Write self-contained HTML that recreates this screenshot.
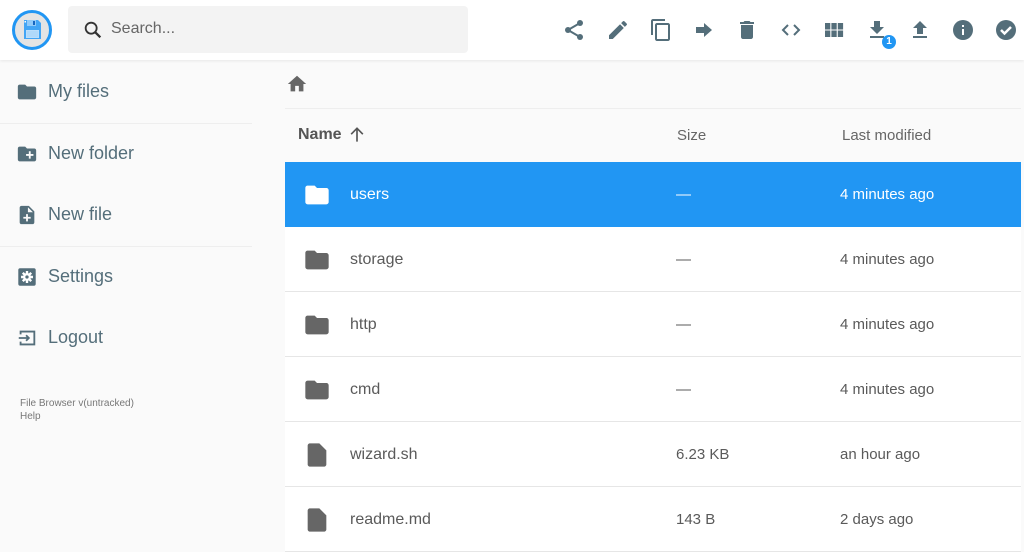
<!DOCTYPE html>
<html><head><meta charset="utf-8"><style>
*{box-sizing:border-box;margin:0;padding:0}
body{width:1024px;height:515px;overflow:hidden;background:#fafafa;font-family:"Liberation Sans",Roboto,sans-serif;position:relative}
.hdr{position:absolute;left:0;top:0;width:1024px;height:60px;background:#fff;box-shadow:0 1px 3px rgba(0,0,0,.08)}
.logo{position:absolute;left:12px;top:10px;width:40px;height:40px;border-radius:50%;border:3px solid #2196f3;background:#e4e4e4;overflow:hidden}
.search{position:absolute;left:68px;top:6px;width:400px;height:47px;background:#f3f3f3;border-radius:4px}
.search span{position:absolute;left:43px;top:14px;font-size:16px;color:#666}
.ic{position:absolute;top:18px;width:24px;height:24px}
.it{position:absolute;left:16px;font-size:18px;color:#546e7a}
.it svg{position:absolute;left:0;top:0;width:22px;height:22px}
.it span{position:absolute;left:32px;top:0;white-space:nowrap}
.sep{position:absolute;left:0;width:252px;height:1px;background:#eee}
.list{position:absolute;left:285px;top:108px;width:736px;}
.row{position:absolute;left:0;width:736px;height:65px;background:#fff;border-bottom:1px solid #e6e6e6;font-size:16px;color:#5a5a5a}
.row.sel{background:#2196f3;color:#fff;border-color:#2196f3}
.row svg{position:absolute;left:18px;top:19px;width:28px;height:28px}
.row .n{position:absolute;left:65px;top:24px}
.row .s{position:absolute;left:391px;top:24px;font-size:15px}
.row .m{position:absolute;left:555px;top:24px;font-size:15px}
</style></head><body>
<div class="hdr">
<div class="logo"><svg viewBox="0 0 34 34" width="34" height="34"><path d="M9 7h14l3 3v16H9z" fill="#42a5f5"/><rect x="12" y="7" width="9" height="6" fill="#90caf9"/><rect x="18" y="8" width="2" height="4" fill="#1565c0"/><rect x="11" y="17" width="13" height="8" fill="#bbdefb"/><path d="M12 19h11M12 21h11M12 23h11" stroke="#90caf9" stroke-width=".6"/><rect x="9.5" y="8" width="1.5" height="1.5" fill="#fff"/></svg></div>
<div class="search"><svg style="position:absolute;left:14px;top:13px" width="22" height="22" viewBox="0 0 24 24"><circle cx="10" cy="10" r="6" stroke="#333" stroke-width="2" fill="none"/><path d="M14.5 14.5L20 20" stroke="#333" stroke-width="2.5"/></svg><span>Search...</span></div>
<svg class="ic" style="left:562px" viewBox="0 0 24 24" fill="#546e7a"><circle cx="18" cy="5" r="3"/><circle cx="6" cy="12" r="3"/><circle cx="18" cy="19" r="3"/><path d="M6 12L18 5M6 12L18 19" stroke="#546e7a" stroke-width="2"/></svg>
<svg class="ic" style="left:606px" viewBox="0 0 24 24" fill="#546e7a"><path d="M3 17.25V21h3.75L17.8 9.94l-3.75-3.75L3 17.25zM20.7 7.04a1 1 0 000-1.41l-2.34-2.34a1 1 0 00-1.41 0l-1.83 1.83 3.75 3.75 1.83-1.83z"/></svg>
<svg class="ic" style="left:649px" viewBox="0 0 24 24" fill="#546e7a"><path d="M16 1H4c-1.1 0-2 .9-2 2v14h2V3h12V1zm3 4H8c-1.1 0-2 .9-2 2v14c0 1.1.9 2 2 2h11c1.1 0 2-.9 2-2V7c0-1.1-.9-2-2-2zm0 16H8V7h11v14z"/></svg>
<svg class="ic" style="left:692px" viewBox="0 0 24 24" fill="#546e7a"><path d="M4 9h8V5l8 7-8 7v-4H4z"/></svg>
<svg class="ic" style="left:735px" viewBox="0 0 24 24" fill="#546e7a"><path d="M6 19c0 1.1.9 2 2 2h8c1.1 0 2-.9 2-2V7H6v12zM19 4h-3.5l-1-1h-5l-1 1H5v2h14V4z"/></svg>
<svg class="ic" style="left:779px" viewBox="0 0 24 24" fill="none" stroke="#546e7a" stroke-width="2"><path d="M9 7l-5 5 5 5M15 7l5 5-5 5"/></svg>
<svg class="ic" style="left:822px" viewBox="0 0 24 24" fill="#546e7a"><path d="M3 5h5.3v6.5H3zM9.4 5h5.3v6.5H9.4zM15.8 5h5.3v6.5h-5.3zM3 12.5h5.3V19H3zM9.4 12.5h5.3V19H9.4zM15.8 12.5h5.3V19h-5.3z"/></svg>
<svg class="ic" style="left:865px" viewBox="0 0 24 24" fill="#546e7a"><path d="M19 9h-4V3H9v6H5l7 7 7-7zM5 18v2h14v-2z"/></svg>
<div style="position:absolute;left:882px;top:35px;width:14px;height:14px;border-radius:50%;background:#2196f3;color:#fff;font-size:10px;text-align:center;line-height:14px;font-weight:bold">1</div>
<svg class="ic" style="left:908px" viewBox="0 0 24 24" fill="#546e7a"><path d="M9 16h6v-6h4l-7-7-7 7h4zM5 18h14v2H5z"/></svg>
<svg class="ic" style="left:951px" viewBox="0 0 24 24"><circle cx="12" cy="12" r="10" fill="#546e7a"/><path d="M11 11h2v6h-2zM11 7h2v2h-2z" fill="#fff"/></svg>
<svg class="ic" style="left:994px" viewBox="0 0 24 24"><circle cx="12" cy="12" r="10" fill="#546e7a"/><path d="M7 12l3.5 3.5L17 9" stroke="#fff" stroke-width="2.5" fill="none"/></svg>
</div>

<div class="it" style="top:81px"><svg viewBox="0 0 24 24" fill="#546e7a"><path d="M10 4H4c-1.1 0-2 .9-2 2v12c0 1.1.9 2 2 2h16c1.1 0 2-.9 2-2V8c0-1.1-.9-2-2-2h-8l-2-2z"/></svg><span>My files</span></div>
<div class="sep" style="top:123px"></div>
<div class="it" style="top:143px"><svg viewBox="0 0 24 24" fill="#546e7a"><path d="M20 6h-8l-2-2H4c-1.1 0-2 .9-2 2v12c0 1.1.9 2 2 2h16c1.1 0 2-.9 2-2V8c0-1.1-.9-2-2-2zm-1 8h-3v3h-2v-3h-3v-2h3V9h2v3h3v2z"/></svg><span>New folder</span></div>
<div class="it" style="top:204px"><svg viewBox="0 0 24 24" fill="#546e7a"><path d="M14 2H6c-1.1 0-2 .9-2 2v16c0 1.1.9 2 2 2h12c1.1 0 2-.9 2-2V8l-6-6zm2 14h-3v3h-2v-3H8v-2h3v-3h2v3h3v2zm-3-7V3.5L18.5 9H13z"/></svg><span>New file</span></div>
<div class="sep" style="top:246px"></div>
<div class="it" style="top:266px"><svg viewBox="0 0 24 24"><rect x="2.5" y="2.5" width="19" height="19" rx="2" fill="#546e7a"/><circle cx="12" cy="12" r="4.3" fill="#fff"/><path d="M12 5.5v13M5.5 12h13M7.4 7.4l9.2 9.2M16.6 7.4l-9.2 9.2" stroke="#fff" stroke-width="2.6"/><circle cx="12" cy="12" r="1.8" fill="#546e7a"/></svg><span>Settings</span></div>
<div class="it" style="top:327px"><svg viewBox="0 0 24 24" fill="none" stroke="#546e7a" stroke-width="2"><path d="M5 8V5h15v14H5v-3M3 12h11M11 9l3 3-3 3"/></svg><span>Logout</span></div>
<div style="position:absolute;left:20px;top:397px;font-size:10px;color:#777;line-height:13px">File Browser v(untracked)<br>Help</div>

<svg style="position:absolute;left:286px;top:73px" width="22" height="22" viewBox="0 0 24 24" fill="#666"><path d="M10 20v-6h4v6h5v-8h3L12 3 2 12h3v8z"/></svg>
<div style="position:absolute;left:285px;top:108px;width:736px;height:1px;background:#eee"></div>
<div style="position:absolute;left:298px;top:126px;font-size:16px;font-weight:bold;color:#555">Name</div>
<svg style="position:absolute;left:347px;top:125px" width="20" height="20" viewBox="0 0 24 24" fill="none" stroke="#555" stroke-width="2"><path d="M12 20V4M5 11l7-7 7 7"/></svg>
<div style="position:absolute;left:677px;top:127px;font-size:15px;color:#666">Size</div>
<div style="position:absolute;left:842px;top:127px;font-size:15px;color:#666">Last modified</div>

<div class="list">
<div class="row sel" style="top:54px"><svg viewBox="0 0 24 24" fill="#fff"><path d="M10 4H4c-1.1 0-2 .9-2 2v12c0 1.1.9 2 2 2h16c1.1 0 2-.9 2-2V8c0-1.1-.9-2-2-2h-8l-2-2z"/></svg><span class="n">users</span><span class="s">—</span><span class="m">4 minutes ago</span></div>
<div class="row" style="top:119px"><svg viewBox="0 0 24 24" fill="#666"><path d="M10 4H4c-1.1 0-2 .9-2 2v12c0 1.1.9 2 2 2h16c1.1 0 2-.9 2-2V8c0-1.1-.9-2-2-2h-8l-2-2z"/></svg><span class="n">storage</span><span class="s">—</span><span class="m">4 minutes ago</span></div>
<div class="row" style="top:184px"><svg viewBox="0 0 24 24" fill="#666"><path d="M10 4H4c-1.1 0-2 .9-2 2v12c0 1.1.9 2 2 2h16c1.1 0 2-.9 2-2V8c0-1.1-.9-2-2-2h-8l-2-2z"/></svg><span class="n">http</span><span class="s">—</span><span class="m">4 minutes ago</span></div>
<div class="row" style="top:249px"><svg viewBox="0 0 24 24" fill="#666"><path d="M10 4H4c-1.1 0-2 .9-2 2v12c0 1.1.9 2 2 2h16c1.1 0 2-.9 2-2V8c0-1.1-.9-2-2-2h-8l-2-2z"/></svg><span class="n">cmd</span><span class="s">—</span><span class="m">4 minutes ago</span></div>
<div class="row" style="top:314px"><svg viewBox="0 0 24 24" fill="#666"><path d="M14 2H6c-1.1 0-2 .9-2 2v16c0 1.1.9 2 2 2h12c1.1 0 2-.9 2-2V8l-6-6z"/></svg><span class="n">wizard.sh</span><span class="s">6.23 KB</span><span class="m">an hour ago</span></div>
<div class="row" style="top:379px"><svg viewBox="0 0 24 24" fill="#666"><path d="M14 2H6c-1.1 0-2 .9-2 2v16c0 1.1.9 2 2 2h12c1.1 0 2-.9 2-2V8l-6-6z"/></svg><span class="n">readme.md</span><span class="s">143 B</span><span class="m">2 days ago</span></div>
</div>
</body></html>
